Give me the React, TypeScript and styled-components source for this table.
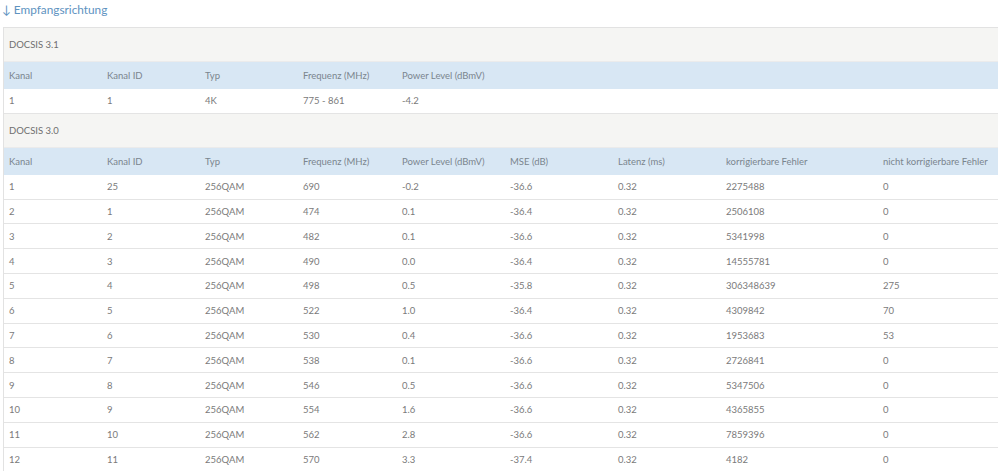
import React from "react";
import styled, { createGlobalStyle } from "styled-components";

const Global = createGlobalStyle`
  html, body { margin: 0; padding: 0; background: #fff; }
  body { font-family: Lato, "Liberation Sans", sans-serif; }
`;

const Page = styled.div`
  width: 998px;
  height: 471px;
  overflow: hidden;
  background: #fff;
`;

const Title = styled.div`
  height: 27px;
  padding: 1px 0 0 2px;
  box-sizing: border-box;
  font-size: 11.8px;
  color: #5e93bf;
  line-height: 18px;
`;

const Panel = styled.div`
  margin-left: 3px;
  border-left: 1px solid #e2e2e2;
  border-top: 1px solid #e2e2e2;
`;

const cols = "98px 98px 98px 99px 108px 108px 108px 157px 1fr";

const Section = styled.div`
  height: 34px;
  display: flex;
  align-items: center;
  padding-left: 5px;
  background: #f5f5f3;
  font-size: 9.5px;
  color: #6f6f6f;
  border-bottom: 1px solid #ebebeb;
  box-sizing: border-box;
`;

const Row = styled.div<{ $head?: boolean }>`
  display: grid;
  grid-template-columns: ${cols};
  align-items: center;
  height: ${(p) => (p.$head ? "27px" : "24.8px")};
  padding-left: 5px;
  box-sizing: border-box;
  background: ${(p) => (p.$head ? "#d8e7f4" : "#fff")};
  border-bottom: ${(p) => (p.$head ? "none" : "1px solid #e4e4e4")};
  font-size: 9.5px;
  color: ${(p) => (p.$head ? "#7a858e" : "#7a7a7a")};
`;

const Cell = styled.div`
  white-space: nowrap;
`;

const head31 = ["Kanal", "Kanal ID", "Typ", "Frequenz (MHz)", "Power Level (dBmV)"];
const head30 = [
  ...head31,
  "MSE (dB)",
  "Latenz (ms)",
  "korrigierbare Fehler",
  "nicht korrigierbare Fehler",
];

const rows30: string[][] = [
  ["1", "25", "256QAM", "690", "-0.2", "-36.6", "0.32", "2275488", "0"],
  ["2", "1", "256QAM", "474", "0.1", "-36.4", "0.32", "2506108", "0"],
  ["3", "2", "256QAM", "482", "0.1", "-36.6", "0.32", "5341998", "0"],
  ["4", "3", "256QAM", "490", "0.0", "-36.4", "0.32", "14555781", "0"],
  ["5", "4", "256QAM", "498", "0.5", "-35.8", "0.32", "306348639", "275"],
  ["6", "5", "256QAM", "522", "1.0", "-36.4", "0.32", "4309842", "70"],
  ["7", "6", "256QAM", "530", "0.4", "-36.6", "0.32", "1953683", "53"],
  ["8", "7", "256QAM", "538", "0.1", "-36.6", "0.32", "2726841", "0"],
  ["9", "8", "256QAM", "546", "0.5", "-36.6", "0.32", "5347506", "0"],
  ["10", "9", "256QAM", "554", "1.6", "-36.6", "0.32", "4365855", "0"],
  ["11", "10", "256QAM", "562", "2.8", "-36.6", "0.32", "7859396", "0"],
  ["12", "11", "256QAM", "570", "3.3", "-37.4", "0.32", "4182", "0"],
];

export default function App() {
  return (
    <Page>
      <Global />
      <Title>↓ Empfangsrichtung</Title>
      <Panel>
        <Section>DOCSIS 3.1</Section>
        <Row $head>
          {head31.map((h) => (
            <Cell key={h}>{h}</Cell>
          ))}
        </Row>
        <Row>
          {["1", "1", "4K", "775 - 861", "-4.2"].map((c, i) => (
            <Cell key={i}>{c}</Cell>
          ))}
        </Row>
        <Section>DOCSIS 3.0</Section>
        <Row $head>
          {head30.map((h) => (
            <Cell key={h}>{h}</Cell>
          ))}
        </Row>
        {rows30.map((r, i) => (
          <Row key={i}>
            {r.map((c, j) => (
              <Cell key={j}>{c}</Cell>
            ))}
          </Row>
        ))}
      </Panel>
    </Page>
  );
}
